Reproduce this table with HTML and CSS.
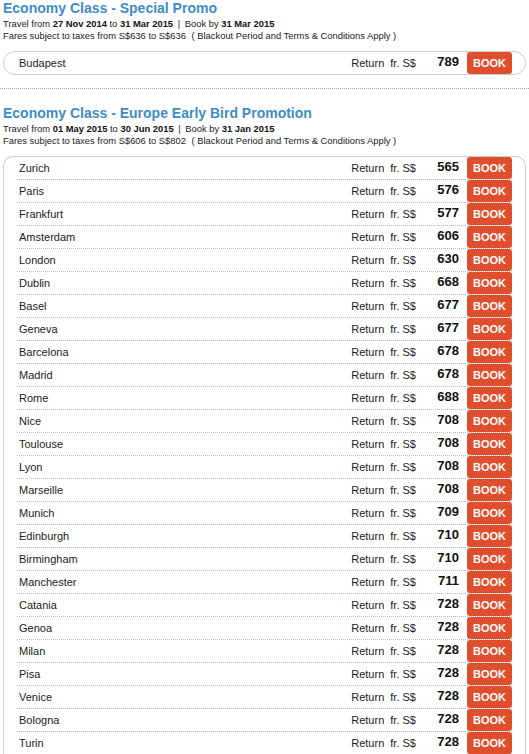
FILE: index.html
```html
<!DOCTYPE html>
<html>
<head>
  <link rel="stylesheet" href="styles.css">
</head>
<body>
  <div class="promo promo-first">
    <div class="promo-title">Economy Class - Special Promo</div>
    <div class="promo-info promo-dates">Travel from <b>27 Nov 2014</b> to <b>31 Mar 2015</b> <span class="sep">|</span> Book by <b>31 Mar 2015</b></div>
    <div class="promo-info">Fares subject to taxes from S$636 to S$636 <span class="note">( Blackout Period and Terms &amp; Conditions Apply )</span></div>
    <div class="fare-box single">
      <div class="fare-row">
        <span class="city">Budapest</span>
        <span class="fare-label">Return <span class="from">fr. S$</span></span>
        <span class="price">789</span>
        <span class="book">BOOK</span>
      </div>
    </div>
  </div>

  <div class="promo">
    <div class="promo-title">Economy Class - Europe Early Bird Promotion</div>
    <div class="promo-info promo-dates">Travel from <b>01 May 2015</b> to <b>30 Jun 2015</b> <span class="sep">|</span> Book by <b>31 Jan 2015</b></div>
    <div class="promo-info">Fares subject to taxes from S$606 to S$802 <span class="note">( Blackout Period and Terms &amp; Conditions Apply )</span></div>
    <div class="fare-box list" id="fare-list"></div>
  </div>

  <script>
    var fares = [
      ["Zurich", 565], ["Paris", 576], ["Frankfurt", 577], ["Amsterdam", 606],
      ["London", 630], ["Dublin", 668], ["Basel", 677], ["Geneva", 677],
      ["Barcelona", 678], ["Madrid", 678], ["Rome", 688], ["Nice", 708],
      ["Toulouse", 708], ["Lyon", 708], ["Marseille", 708], ["Munich", 709],
      ["Edinburgh", 710], ["Birmingham", 710], ["Manchester", 711], ["Catania", 728],
      ["Genoa", 728], ["Milan", 728], ["Pisa", 728], ["Venice", 728],
      ["Bologna", 728], ["Turin", 728]
    ];

    var list = document.getElementById("fare-list");
    fares.forEach(function (f) {
      var row = document.createElement("div");
      row.className = "fare-row";
      row.innerHTML =
        '<span class="city">' + f[0] + '</span>' +
        '<span class="fare-label">Return <span class="from">fr. S$</span></span>' +
        '<span class="price">' + f[1] + '</span>' +
        '<span class="book">BOOK</span>';
      list.appendChild(row);
    });
  </script>
</body>
</html>
```

FILE: styles.css
```css
body {
  margin: 0;
  font-family: "Liberation Sans", Arial, sans-serif;
  color: #222;
  background: #fff;
}

.promo {
  padding: 0 3px;
  margin-top: 16px;
}

.promo-first {
  margin-top: 0;
  padding-bottom: 13px;
  border-bottom: 1px dotted #aaa;
}

.promo-title {
  font-size: 14px;
  line-height: 16px;
  font-weight: bold;
  color: #3f8dc4;
}

.promo-info {
  font-size: 9.4px;
  line-height: 12px;
  color: #222;
}

.promo-dates {
  margin-top: 2px;
}

.promo-info b {
  color: #111;
}

.sep {
  margin: 0 2px;
}

.note {
  margin-left: 3px;
}

.fare-box {
  margin-top: 9px;
  border: 1px solid #ccc;
  padding: 0 13px 0 13px;
}

.fare-box.single {
  border-radius: 12px;
}

.fare-box.list {
  border-radius: 10px 10px 0 0;
  border-bottom: none;
}

.fare-row {
  display: flex;
  align-items: flex-start;
  height: 22px;
  font-size: 11px;
  line-height: 22px;
}

.list .fare-row {
  border-bottom: 1px dotted #bbb;
}

.city {
  flex: 1;
  padding-left: 2px;
  color: #222;
}

.fare-label {
  color: #222;
}

.from {
  margin-left: 3px;
}

.price {
  width: 43px;
  text-align: right;
  margin-right: 8px;
  font-size: 13px;
  line-height: 19px;
  font-weight: bold;
  color: #111;
}

.book {
  width: 45px;
  height: 22px;
  background-color: #df4f2d;
  border-radius: 3px;
  color: #fff;
  font-weight: bold;
  font-size: 11px;
  text-align: center;
}
```
